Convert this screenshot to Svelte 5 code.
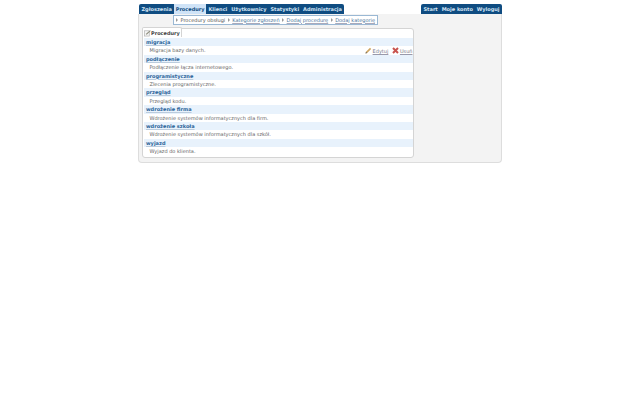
<script>
  const left = ['Zgłoszenia', 'Procedury', 'Klienci', 'Użytkownicy', 'Statystyki', 'Administracja'];
  const right = ['Start', 'Moje konto', 'Wyloguj'];
  const sub = ['Procedury obsługi', 'Kategorie zgłoszeń', 'Dodaj procedurę', 'Dodaj kategorię'];
  const rows = [
    ['migracja', 'Migracja bazy danych.'],
    ['podłączenie', 'Podłączenie łącza internetowego.'],
    ['programistyczne', 'Zlecenia programistyczne.'],
    ['przegląd', 'Przegląd kodu.'],
    ['wdrożenie firma', 'Wdrożenie systemów informatycznych dla firm.'],
    ['wdrożenie szkoła', 'Wdrożenie systemów informatycznych dla szkół.'],
    ['wyjazd', 'Wyjazd do klienta.']
  ];
</script>

<div class="page">
  <nav class="top">
    <ul class="tabs">
      {#each left as t, i}
        <li class:active={i === 1}>{t}</li>
      {/each}
    </ul>
    <ul class="tabs">
      {#each right as t}
        <li>{t}</li>
      {/each}
    </ul>
  </nav>
  <div class="panel">
    <div class="subrow">
      <div class="sub">
        {#each sub as s, i}
          <span class="arrow"></span><span class:first={i === 0} class="sublink">{s}</span>
        {/each}
      </div>
    </div>
    <div class="card">
      <div class="cardtab">
        <svg width="7" height="8" viewBox="0 0 8 8"><rect x="0.5" y="1.5" width="5.5" height="6" fill="#f4f4f4" stroke="#aaa" stroke-width="0.7"/><path d="M2 5 L7 0.8 L7.6 1.6 L3 6 Z" fill="#8a8a7a"/></svg>
        <span>Procedury</span>
      </div>
      <div class="list">
        {#each rows as r, i}
          <div class="head">{r[0]}</div>
          <div class="desc">
            <span>{r[1]}</span>
            {#if i === 0}
              <span class="actions">
                <svg width="7" height="7" viewBox="0 0 7 7"><path d="M0.5 6.5 L1 4.8 L5 0.8 L6.2 2 L2.2 6 Z" fill="#cfa661"/><path d="M0.5 6.5 L1 4.8 L2.2 6 Z" fill="#666"/></svg>
                <u class="edit">Edytuj</u>
                <svg class="x" width="7" height="7" viewBox="0 0 7 7"><path d="M1 1 L6 6 M6 1 L1 6" stroke="#c8534e" stroke-width="2"/></svg><u>Usuń</u>
              </span>
            {/if}
          </div>
        {/each}
      </div>
    </div>
  </div>
</div>

<style>
  :global(body) { margin: 0; background: #fff; }
  .page {
    width: 364px;
    margin-left: 138px;
    padding-top: 4px;
    font-family: "DejaVu Sans", sans-serif;
    font-size: 5px;
    color: #444;
  }
  .top { display: flex; justify-content: space-between; height: 10px; padding-left: 1px; }
  .tabs {
    display: flex;
    list-style: none;
    margin: 0;
    padding: 0 0.5px;
    background: #0f4c81;
    border-radius: 2px 2px 0 0;
  }
  .tabs li {
    padding: 0 1.95px;
    line-height: 10px;
    color: #d5e5f5;
    font-weight: bold;
    white-space: nowrap;
  }
  .tabs li.active { background: #cfe3f7; color: #0f4c81; }
  .panel {
    box-sizing: border-box;
    height: 149px;
    padding: 0 3px;
    background: #f3f3f3;
    border: 1px solid #ddd;
    border-top: 0;
    border-radius: 0 0 4px 4px;
  }
  .subrow { display: flex; padding: 1px 0 0 31px; height: 14px; box-sizing: border-box; }
  .sub {
    display: flex;
    align-items: center;
    gap: 2.5px;
    height: 10px;
    padding: 0 2px 1px;
    background: #fff;
    border: 1px solid #9ab8d4;
    box-sizing: border-box;
    white-space: nowrap;
  }
  .arrow {
    width: 0;
    height: 0;
    border-left: 2.5px solid #999;
    border-top: 2.5px solid transparent;
    border-bottom: 2.5px solid transparent;
  }
  .sublink { text-decoration: underline; text-decoration-color: #aab; color: #4a7499; }
  .sublink.first { text-decoration: none; color: #555; }
  .card {
    position: relative;
    width: 272px;
    box-sizing: border-box;
    background: #fff;
    border: 1px solid #d4d4d4;
    border-radius: 3px;
    padding: 9px 0 1px 1px;
    height: 130px;
  }
  .cardtab {
    position: absolute;
    left: -1px;
    top: -2px;
    display: flex;
    align-items: center;
    gap: 0.5px;
    height: 10px;
    padding: 0 1px 0 0.5px;
    background: #fff;
    border: 1px solid #d4d4d4;
    border-bottom: 0;
    box-sizing: border-box;
    border-radius: 2px 2px 0 0;
    font-weight: bold;
    color: #444;
  }
  .head {
    height: 8.4px;
    line-height: 8.4px;
    padding-left: 2px;
    background: #e8f2fc;
    color: #2a6399;
    font-weight: bold;
    text-decoration: underline;
    text-decoration-color: #bcd;
  }
  .desc {
    display: flex;
    justify-content: space-between;
    height: 8.4px;
    line-height: 8.4px;
    padding-left: 5.5px;
    color: #666;
  }
  .actions { display: flex; align-items: center; gap: 1px; padding-right: 0.5px; }
  .actions u { text-decoration-color: #99a; color: #778; padding-top: 1px; }
  .edit { margin-right: 2.5px; }
</style>
